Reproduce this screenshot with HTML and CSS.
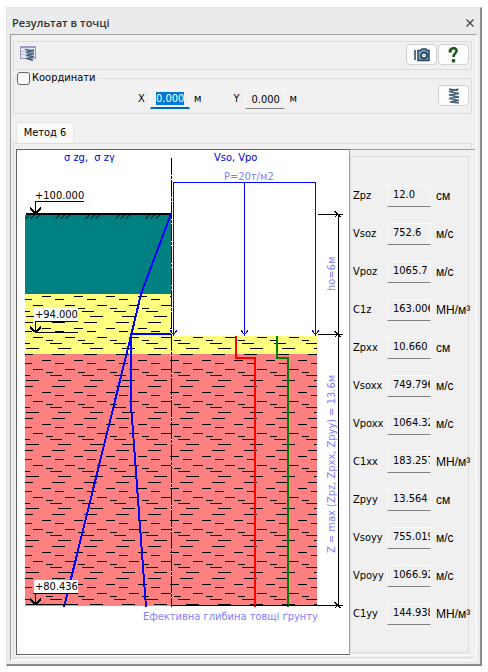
FILE: index.html
```
<!DOCTYPE html>
<html lang="uk">

<head>
    <meta charset="UTF-8">
    <meta name="viewport" content="width=device-width, initial-scale=1.0">
    <title>Результат в точці</title>
    <link rel="stylesheet" href="styles.css">
</head>

<body>
    <div class="window">
        <div class="title-bar">
            <h1>Результат в точці</h1>
            <button type="button" class="close" aria-label="Закрити">
                <svg width="8" height="8" viewBox="0 0 8 8"><path d="M0.5 0.5L7.5 7.5M7.5 0.5L0.5 7.5" stroke="#444" stroke-width="1.300" /></svg>
            </button>
        </div>
        <div class="client">
            <!-- toolbar -->
            <div class="toolbar">
                <button type="button" class="flat-btn" aria-label="Таблиця">
                    <svg width="16" height="16" viewBox="0 0 16 16">
                        <rect x="0.5" y="0.5" width="15" height="12" fill="#e4e8f2" stroke="#9a9ab8" />
                        <rect x="0" y="0" width="16" height="2" fill="#9d9bcb" />
                        <path d="M1 5.500h4M1 8.500h4" stroke="#b4bccb" />
                        <path d="M5 3.500l9 1.500M14 4l-8 2.500l8 1l-8 2l8 1l-7 2l6 2" fill="none" stroke="#3f5f7c" stroke-width="1.500" />
                    </svg>
                </button>
                <div class="tools">
                    <button type="button" class="btn" aria-label="Знімок">
                        <svg width="16" height="14" viewBox="0 0 16 14">
                            <path d="M1 2v10M4 2.500h2.500l1.500-1.500h4l1 1.500h2v10H4z" fill="#8aa7bf" stroke="#23455f" stroke-width="1.500" />
                            <circle cx="10" cy="7.500" r="3" fill="#fff" stroke="#23455f" stroke-width="1.800" />
                            <circle cx="10" cy="7.500" r="1" fill="#9ab4c8" />
                        </svg>
                    </button>
                    <button type="button" class="btn" aria-label="Довідка">
                        <svg width="11" height="16" viewBox="0 0 11 16">
                            <path d="M2 4.500C1.500 0.500 9 0 8.500 4C8.300 6.500 5.500 6.500 5.500 10" fill="none" stroke="#1e5a24" stroke-width="2.600" />
                            <circle cx="2.200" cy="4.300" r="1.500" fill="#1e5a24" />
                            <circle cx="5.500" cy="13.700" r="1.900" fill="#1e5a24" />
                        </svg>
                    </button>
                </div>
            </div>

            <!-- coordinates -->
            <fieldset class="coords">
                <legend><label><input type="checkbox">Координати</label></legend>
                <div class="coords-row">
                    <div class="coord">
                        <label for="x">X</label>
                        <input type="text" id="x" class="field active" value="0.000">
                        <span>м</span>
                    </div>
                    <div class="coord">
                        <label for="y">Y</label>
                        <input type="text" id="y" class="field" value="0.000">
                        <span>м</span>
                    </div>
                    <button type="button" class="btn" aria-label="Обчислити">
                        <svg width="12" height="16" viewBox="0 0 12 16">
                            <path d="M1 1l9 1.500M10.500 1L1 3.500l10 2L1 7l10 2L1 10.500l10 2L2 14l9 1" fill="none" stroke="#47647c" stroke-width="1.500" />
                        </svg>
                    </button>
                </div>
            </fieldset>

            <!-- tabs -->
            <div class="tabs">
                <button type="button" class="tab">Метод 6</button>
            </div>
            <div class="tab-panel">
                <div class="content">
                    <div class="diagram">
                        <svg viewBox="0 0 332 504">
                            <defs>
                                <pattern id="clay" x="16" y="204" width="32" height="32" patternUnits="userSpaceOnUse">
                                    <path d="M19 0.500h13M9 6.500h9M22 9.500h9M0 15.500h10M13 18.500h7M17 21.500h12M25 26.500h7M0 26.500h6" stroke="#000" />
                                </pattern>
                                <g id="slashes">
                                    <path d="M0.500 5l4-4M5.500 5l4-4M10.500 5l4-4" stroke="#000" shape-rendering="geometricPrecision" />
                                </g>
                                <g id="load">
                                    <path d="M0 0v154M-3.500 148l3.500 5l3.500-5" fill="none" stroke="#00f" />
                                </g>
                                <g id="tick">
                                    <path d="M-20 0h25M-3.500-3.500l6 6M-3.500 3l3-3" fill="none" stroke="#000" />
                                </g>
                            </defs>

                            <!-- soil layers -->
                            <rect x="8" y="65" width="147" height="79" fill="#008080" />
                            <rect x="8" y="144" width="147" height="60" fill="#ffff80" />
                            <rect x="155" y="186" width="145" height="18" fill="#ffff80" />
                            <rect x="8" y="204" width="292" height="252" fill="#ff8080" />
                            <rect x="8" y="144" width="147" height="312" fill="url(#clay)" />
                            <rect x="155" y="186" width="145" height="270" fill="url(#clay)" />
                            <path d="M9 64h146" stroke="#000" stroke-width="2" />
                            <use href="#slashes" x="8" y="64" />
                            <use href="#slashes" x="38" y="64" />
                            <use href="#slashes" x="68" y="64" />
                            <use href="#slashes" x="98" y="64" />
                            <use href="#slashes" x="128" y="64" />

                            <!-- axis -->
                            <path d="M154.500 8v449" stroke="#fff" />
                            <path d="M154.500 8v449" stroke="#000" stroke-dasharray="17 1 3 1" />

                            <!-- load -->
                            <path d="M156 32.500h143" stroke="#00f" />
                            <use href="#load" x="156.500" y="32" />
                            <use href="#load" x="227.500" y="32" />
                            <use href="#load" x="298.500" y="32" />

                            <!-- stresses -->
                            <g fill="none" stroke="#00f" stroke-width="2">
                                <path d="M154 64L124 144L114 186L47 457" />
                                <path d="M154 184h-40v71L117 295L124 390L129 457" />
                            </g>
                            <path d="M219 186v22h19v249" fill="none" stroke="#f00" stroke-width="2" />
                            <path d="M260 186v22h11v249" fill="none" stroke="#008000" stroke-width="2" />

                            <!-- dimensions -->
                            <path d="M321.500 64v392M154 455.500h150" stroke="#000" />
                            <use href="#tick" x="321" y="64.500" />
                            <use href="#tick" x="321" y="184.500" />
                            <use href="#tick" x="321" y="455.500" />

                            <!-- level marks -->
                            <rect x="17" y="158" width="44" height="13" fill="#fff" />
                            <rect x="17" y="430" width="44" height="13" fill="#fff" />
                            <g fill="none" stroke="#000">
                                <path d="M18.500 63V51.500H67" />
                                <path d="M18.500 182V171.500H61M18 182.500h43" />
                                <path d="M18.500 455V443.500H61M9 454.500h52" />
                            </g>
                            <g fill="none" stroke="#000" stroke-width="2">
                                <path d="M13 58l5.500 5l5.500-5" />
                                <path d="M13 177l5.500 5l5.500-5" />
                                <path d="M13 449l5.500 5l5.500-5" />
                            </g>
                            <text x="18" y="49">+100.000</text>
                            <text x="18" y="168">+94.000</text>
                            <text x="18" y="440">+80.436</text>

                            <text x="47" y="11" class="blue">σ zg,&#160; σ zγ</text>
                            <text x="197" y="11" class="blue">Vso, Vpo</text>
                            <text x="207" y="30" class="violet">P=20т/м2</text>
                            <text x="126" y="470" class="violet">Ефективна глибина товщі ґрунту</text>
                            <text transform="translate(318 141) rotate(-90)" class="violet">ho=6м</text>
                            <text transform="translate(318 403) rotate(-90)" class="violet">Z = max (Zpz, Zpxx, Zpyy) = 13.6м</text>
                        </svg>
                    </div>
                    <div class="results">
                        <div class="result"><label for="zpz">Zpz</label><input type="text" id="zpz" class="field" value="12.0"><span>см</span></div>
                        <div class="result"><label for="vsoz">Vsoz</label><input type="text" id="vsoz" class="field" value="752.6"><span>м/с</span></div>
                        <div class="result"><label for="vpoz">Vpoz</label><input type="text" id="vpoz" class="field" value="1065.7"><span>м/с</span></div>
                        <div class="result"><label for="c1z">C1z</label><input type="text" id="c1z" class="field" value="163.006"><span>МН/м³</span></div>
                        <div class="result"><label for="zpxx">Zpxx</label><input type="text" id="zpxx" class="field" value="10.660"><span>см</span></div>
                        <div class="result"><label for="vsoxx">Vsoxx</label><input type="text" id="vsoxx" class="field" value="749.796"><span>м/с</span></div>
                        <div class="result"><label for="vpoxx">Vpoxx</label><input type="text" id="vpoxx" class="field" value="1064.32"><span>м/с</span></div>
                        <div class="result"><label for="c1xx">C1xx</label><input type="text" id="c1xx" class="field" value="183.257"><span>МН/м³</span></div>
                        <div class="result"><label for="zpyy">Zpyy</label><input type="text" id="zpyy" class="field" value="13.564"><span>см</span></div>
                        <div class="result"><label for="vsoyy">Vsoyy</label><input type="text" id="vsoyy" class="field" value="755.019"><span>м/с</span></div>
                        <div class="result"><label for="vpoyy">Vpoyy</label><input type="text" id="vpoyy" class="field" value="1066.92"><span>м/с</span></div>
                        <div class="result"><label for="c1yy">C1yy</label><input type="text" id="c1yy" class="field" value="144.938"><span>МН/м³</span></div>
                    </div>
                </div>
            </div>
        </div>
    </div>

    <script>
        // the X field is ready for typing
        var x = document.querySelector('#x');
        x.focus();
        x.select();
    </script>
</body>

</html>
```
FILE: styles.css
```
* {
    box-sizing: border-box;
    margin: 0;
    padding: 0;
}

body {
    padding: 7px 6px 6px;
    background: #fff;
    color: #000;
    font: 11px/14px "DejaVu Sans Condensed", "DejaVu Sans", sans-serif;
}

button,
input {
    font: inherit;
    color: inherit;
}

svg {
    display: block;
}

/* window frame */
.window {
    padding: 0 3px 3px;
    background: #e9ebec;
    border: 1px solid #e3e3e3;
    border-right: 2px solid #8a8a8a;
    border-bottom: 2px solid #8a8a8a;
}

.title-bar {
    display: flex;
    align-items: center;
    justify-content: space-between;
    height: 26px;
    padding: 4px 3px 0 2px;
}

.title-bar h1 {
    color: #333;
    font: 600 11px/16px "Open Sans", "Noto Sans", sans-serif;
}

.close {
    border: 0;
    background: none;
}

.client {
    padding: 6px 4px 2px 2px;
    background: #f0f0f0;
    border: 1px solid #a0a0a0;
    border-right-color: #fff;
    border-bottom-color: #fff;
}

/* toolbar */
.toolbar {
    display: flex;
    justify-content: space-between;
    height: 29px;
    padding: 2px 2px 2px 6px;
    border: 1px solid #dcdcdc;
}

.tools {
    display: flex;
    gap: 1px;
}

.flat-btn {
    height: 20px;
    border: 0;
    background: none;
}

.btn {
    display: flex;
    align-items: center;
    justify-content: center;
    width: 31px;
    height: 21px;
    background: #fdfdfd;
    border: 1px solid #d0d0d0;
    border-radius: 4px;
}

/* coordinates */
.coords {
    margin-top: 1px;
    border: 1px solid #dcdcdc;
}

.coords legend {
    margin-left: 3px;
    padding-right: 2px;
}

.coords legend label {
    display: flex;
    align-items: center;
    gap: 2px;
}

.coords legend input {
    appearance: none;
    width: 13px;
    height: 13px;
    background: #fafafa;
    border: 1px solid #666;
    border-radius: 3px;
}

.coords-row {
    display: flex;
    height: 28px;
    padding: 0 2px 0 124px;
}

.coord {
    display: flex;
    align-items: center;
    height: 24px;
    margin-top: 2px;
    margin-right: 32px;
}

.coord label {
    width: 12px;
}

.coord .field {
    width: 40px;
    height: 20px;
    margin-right: 4px;
}

.coords .btn {
    margin-left: auto;
}

.field {
    width: 44px;
    height: 22px;
    padding: 0 0 3px 5px;
    background: #f0f0f0;
    border: 1px solid #fafafa;
    border-bottom-color: #808080;
    outline: 0;
}

.coord .field {
    padding-bottom: 0;
}

.field.active {
    border-bottom: 2px solid #0067c0;
}

.field::selection {
    background: #0078d7;
    color: #fff;
}

/* tabs */
.tabs {
    display: flex;
    margin-top: 8px;
    padding-left: 3px;
}

.tab {
    width: 58px;
    height: 21px;
    background: #fafafa;
    border: 1px solid #e6e6e6;
    border-bottom: 0;
}

.tab-panel {
    padding: 5px 0 1px 2px;
    border: 1px solid #dcdcdc;
}

.content {
    display: flex;
    margin-right: -4px;
    background: #f0f0f0;
    border-top: 1px solid #a0a0a0;
    border-bottom: 1px solid #fff;
}

.diagram {
    flex: 1;
    margin-top: -1px;
    background: #fff;
    border: 1px solid #646464;
    border-right-color: #a0a0a0;
}

.diagram svg {
    width: 100%;
    shape-rendering: crispEdges;
}

.diagram text {
    font-size: 11px;
}

.diagram .blue {
    fill: #0000e0;
}

.diagram .violet {
    fill: #8080ff;
}

/* results */
.results {
    display: flex;
    flex-direction: column;
    gap: 16px;
    width: 119px;
    margin: 6px 6px 2px 0;
    padding: 28px 0 0 2px;
    border: 1px solid #dcdcdc;
}

.result {
    display: flex;
    align-items: center;
    height: 22px;
}

.result label {
    flex: none;
    width: 34px;
}

.result .field {
    flex: none;
    margin-right: 5px;
}

.result span {
    font: 12px/16px "Liberation Sans", Arial, sans-serif;
    white-space: nowrap;
}
```
